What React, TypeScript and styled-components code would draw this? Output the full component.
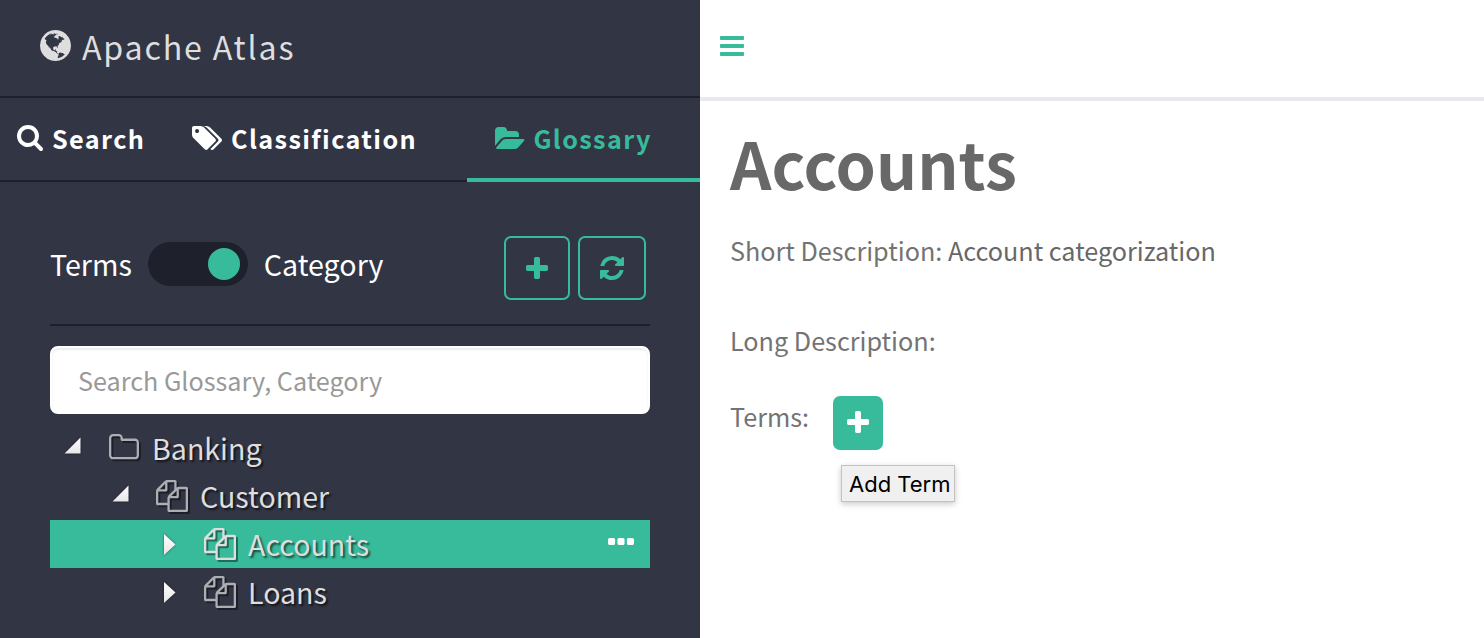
import React from "react";
import styled, { createGlobalStyle, css } from "styled-components";

const green = "#38bb9b";
const navy = "#323544";
const ink = "#1e202b";
const sourceSans = `"Noto Sans CJK SC", "Noto Sans", sans-serif`;

const GlobalStyle = createGlobalStyle`
  * { box-sizing: border-box; }
  body { margin: 0; background: #fff; font-family: ${sourceSans}; }
  button, input { font: inherit; }
`;

type Glyph = { box: [number, number, number, number]; d: string };

const glyphs: Record<string, Glyph> = {
  globe: {
    box: [128, 128, 1536, 1536],
    d: "M896 128q209 0 385.5 103t279.5 279.5 103 385.5-103 385.5-279.5 279.5-385.5 103-385.5-103-279.5-279.5-103-385.5 103-385.5 279.5-279.5 385.5-103zm274 521q-2 1-9.5 9.5t-13.5 9.5q2 0 4.5-5t5-11 3.5-7q6-7 22-15 14-6 52-12 34-8 51 11-2-2 9.5-13t14.5-12q3-2 15-4.5t15-7.5l2-22q-12 1-17.5-7t-6.5-21q0 2-6 8 0-7-4.5-8t-11.5 1-9 1q-10-3-15-7.5t-8-16.5-4-15q-2-5-9.5-11t-9.5-10q-1-2-2.5-5.5t-3-6.5-4-5.5-5.5-2.5-7 5-7.5 10-4.5 5q-3-2-6-1.5t-4.5 1-4.5 3-5 3.5q-3 2-8.5 3t-8.5 2q15-5-1-11-10-4-16-3 9-4 7.5-12t-8.5-14h5q-1-4-8.5-8.5t-17.5-8.5-13-6q-8-5-34-9.5t-33-.5q-5 6-4.5 10.5t4 14 3.5 12.5q1 6-5.5 13t-6.5 12q0 7 14 15.5t10 21.5q-3 8-16 16t-16 12q-5 8-1.5 18.5t10.5 16.5q2 2 1.5 4t-3.5 4.5-5.5 4-6.5 3.5l-3 2q-11 5-20.5-6t-13.5-26q-7-25-16-30-23-8-29 1-5-13-41-26-25-9-58-4 6-1 0-15-7-15-19-12 3-6 4-17.5t1-13.5q3-13 12-23 1-1 7-8.5t9.5-13.5.5-6q35 4 50-11 5-5 11.5-17t10.5-17q9-6 14-5.5t14.5 5.5 14.5 5q14 1 15.5-11t-7.5-20q12 1 3-17-4-7-8-9-12-4-27 5-8 4 2 8-1-1-9.5 10.5t-16.5 17.5-16-5q-1-1-5.5-13.5t-9.5-13.5q-8 0-16 15 3-8-11-15t-24-8q19-12-8-27-7-4-20.5-5t-19.5 4q-5 7-5.5 11.5t5 8 10.5 5.5 11.5 4 8.5 3q14 10 8 14-2 1-8.5 3.5t-11.5 4.5-6 4q-3 4 0 14t-2 14q-5-5-9-17.5t-7-16.5q7 9-25 6l-10-1q-4 0-16 2t-20.5 1-13.5-8q-4-8 0-20 1-4 4-2-4-3-11-9.5t-10-8.5q-46 15-94 41 6 1 12-1 5-2 13-6.5t10-5.5q34-14 42-7l5-5q14 16 20 25-7-4-30-1-20 6-22 12 7 12 5 18-4-3-11.5-10t-14.5-11-15-5q-16 0-22 1-146 80-235 222 7 7 12 8 4 1 5 9t2.5 11 11.5-3q9 8 3 19 1-1 44 27 19 17 21 21 3 11-10 18-1-2-9-9t-9-4q-3 5 .5 18.5t10.5 12.5q-7 0-9.5 16t-2.5 35.5-1 23.5l2 1q-3 12 5.5 34.5t21.5 19.5q-13 3 20 43 6 8 8 9 3 2 12 7.5t15 10 10 10.5q4 5 10 22.5t14 23.5q-2 6 9.5 20t10.5 23q-1 0-2.5 1t-2.5 1q3 7 15.5 14t15.5 13q1 3 2 10t3 11 8 2q2-20-24-62-15-25-17-29-3-5-5.5-15.5t-4.5-14.5q2 0 6 1.5t8.5 3.5 7.5 4 2 3q-3 7 2 17.5t12 18.5 17 19 12 13q6 6 14 19.5t0 13.5q9 0 20 10.5t17 19.5q5 8 8 26t5 24q2 7 8.5 13.5t12.5 9.5l16 8 13 7q5 2 18.5 10.5t21.5 11.5q10 4 16 4t14.5-2.5 13.5-3.5q15-2 29 15t21 21q36 19 55 11-2 1 .5 7.5t8 15.5 9 14.5 5.5 8.5q5 6 18 15t18 15q6-4 7-9-3 8 7 20t18 10q14-3 14-32-31 15-49-18 0-1-2.5-5.5t-4-8.5-2.5-8.5 0-7.5 5-3q9 0 10-3.5t-2-12.5-4-13q-1-8-11-20t-12-15q-5 9-16 8t-16-9q0 1-1.5 5.5t-1.5 6.5q-13 0-15-1 1-3 2.5-17.5t3.5-22.5q1-4 5.5-12t7.5-14.5 4-12.5-4.5-9.5-17.5-2.5q-19 1-26 20-1 3-3 10.5t-5 11.5-9 7q-7 3-24 2t-24-5q-13-8-22.5-29t-9.5-37q0-10 2.5-26.5t3-25-5.5-24.5q3-2 9-9.5t10-10.5q2-1 4.5-1.5t4.5 0 4-1.5 3-6q-1-1-4-3-3-3-4-3 7 3 28.5-1.5t27.5 1.5q15 11 22-2 0-1-2.5-9.5t-.5-13.5q5 27 29 9 3 3 15.5 5t17.5 5q3 2 7 5.5t5.5 4.5 5-.5 8.5-6.5q10 14 12 24 11 40 19 44 7 3 11 2t4.5-9.5 0-14-1.5-12.5l-1-8v-18l-1-8q-15-3-18.5-12t1.5-18.5 15-18.5q1-1 8-3.5t15.5-6.5 12.5-8q21-19 15-35 7 0 11-9-1 0-5-3t-7.5-5-4.5-2q9-5 2-16 5-3 7.5-11t7.5-10q9 12 21 2 8-8 1-16 5-7 20.5-10.5t18.5-9.5q7 2 8-2t1-12 3-12q4-5 15-9t13-5l17-11q3-4 0-4 18 2 31-11 10-11-6-20 3-6-3-9.5t-15-5.5q3-1 11.5-.5t10.5-1.5q15-10-7-16-17-5-43 12zm-163 877q206-36 351-189-3-3-12.5-4.5t-12.5-3.5q-18-7-24-8 1-7-2.5-13t-8-9-12.5-8-11-7q-2-2-7-6t-7-5.5-7.5-4.5-8.5-2-10 1l-3 1q-3 1-5.5 2.5t-5.5 3-4 3 0 2.5q-21-17-36-22-5-1-11-5.5t-10.5-7-10-1.5-11.5 7q-5 5-6 15t-2 13q-7-5 0-17.5t2-18.5q-3-6-10.5-4.5t-12 4.5-11.5 8.5-9 6.5-8.5 5.5-8.5 7.5q-3 4-6 12t-5 11q-2-4-11.5-6.5t-9.5-5.5q2 10 4 35t5 38q7 31-12 48-27 25-29 40-4 22 12 26 0 7-8 20.5t-7 21.5q0 6 2 16z",
  },
  search: {
    box: [64, 128, 1664, 1664],
    d: "M1216 832q0-185-131.5-316.5t-316.5-131.5-316.5 131.5-131.5 316.5 131.5 316.5 316.5 131.5 316.5-131.5 131.5-316.5zm512 832q0 52-38 90t-90 38q-54 0-90-38l-343-342q-179 124-399 124-143 0-273.5-55.5t-225-150-150-225-55.5-273.5 55.5-273.5 150-225 225-150 273.5-55.5 273.5 55.5 225 150 150 225 55.5 273.5q0 220-124 399l343 343q37 37 37 90z",
  },
  tags: {
    box: [0, 128, 1899, 1515],
    d: "M448 448q0-53-37.5-90.5t-90.5-37.5-90.5 37.5-37.5 90.5 37.5 90.5 90.5 37.5 90.5-37.5 37.5-90.5zm1067 576q0 53-37 90l-491 492q-39 37-91 37-53 0-90-37l-715-716q-38-37-64.5-101t-26.5-117v-416q0-52 38-90t90-38h416q53 0 117 26.5t102 64.5l715 714q37 39 37 91zm384 0q0 53-37 90l-491 492q-39 37-91 37-36 0-59-14t-53-45l470-470q37-37 37-90 0-52-37-91l-715-714q-38-38-102-64.5t-117-26.5h224q53 0 117 26.5t102 64.5l715 714q37 39 37 91z",
  },
  folderOpen: {
    box: [64, 128, 1879, 1408],
    d: "M1943 952q0 31-31 66l-336 396q-43 51-120.5 86.5t-143.5 35.5h-1088q-34 0-60.5-13t-26.5-43q0-31 31-66l336-396q43-51 120.5-86.5t143.5-35.5h1088q34 0 60.5 13t26.5 43zm-343-344v160h-832q-94 0-197 47.5t-164 119.5l-337 396-5 6q0-4-.5-12.5t-.5-12.5v-960q0-92 66-158t158-66h320q92 0 158 66t66 158v32h544q92 0 158 66t66 158z",
  },
  plus: {
    box: [192, 128, 1408, 1408],
    d: "M1600 736v192q0 40-28 68t-68 28h-416v416q0 40-28 68t-68 28h-192q-40 0-68-28t-28-68v-416h-416q-40 0-68-28t-28-68v-192q0-40 28-68t68-28h416v-416q0-40 28-68t68-28h192q40 0 68 28t28 68v416h416q40 0 68 28t28 68z",
  },
  refresh: {
    box: [128, 128, 1536, 1536],
    d: "M1639 1056q0 5-1 7-64 268-268 434.5t-478 166.5q-146 0-282.5-55t-243.5-157l-129 129q-19 19-45 19t-45-19-19-45v-448q0-26 19-45t45-19h448q26 0 45 19t19 45-19 45l-137 137q71 66 161 102t187 36q134 0 250-65t186-179q11-17 53-117 8-23 30-23h192q13 0 22.5 9.5t9.5 22.5zm25-800v448q0 26-19 45t-45 19h-448q-26 0-45-19t-19-45 19-45l138-138q-148-137-349-137-134 0-250 65t-186 179q-11 17-53 117-8 23-30 23h-199q-13 0-22.5-9.5t-9.5-22.5v-7q65-268 270-434.5t480-166.5q146 0 284 55.5t245 156.5l130-129q19-19 45-19t45 19 19 45z",
  },
  bars: {
    box: [128, 256, 1536, 1280],
    d: "M1664 1344v128q0 26-19 45t-45 19h-1408q-26 0-45-19t-19-45v-128q0-26 19-45t45-19h1408q26 0 45 19t19 45zm0-512v128q0 26-19 45t-45 19h-1408q-26 0-45-19t-19-45v-128q0-26 19-45t45-19h1408q26 0 45 19t19 45zm0-512v128q0 26-19 45t-45 19h-1408q-26 0-45-19t-19-45v-128q0-26 19-45t45-19h1408q26 0 45 19t19 45z",
  },
  files: {
    box: [0, 0, 1792, 1792],
    d: "M1696 384q40 0 68 28t28 68v1216q0 40-28 68t-68 28h-960q-40 0-68-28t-28-68v-288h-544q-40 0-68-28t-28-68v-672q0-40 20-88t48-76l408-408q28-28 76-48t88-20h416q40 0 68 28t28 68v328q68-40 128-40h416zm-544 213l-299 299h299v-299zm-640-384l-299 299h299v-299zm196 647l316-316v-416h-384v416q0 40-28 68t-68 28h-416v640h512v-256q0-40 20-88t48-76zm956 804v-1152h-384v416q0 40-28 68t-68 28h-416v640h896z",
  },
  folder: {
    box: [64, 128, 1664, 1408],
    d: "M1600 1312v-704q0-40-28-68t-68-28h-704q-40 0-68-28t-28-68v-64q0-40-28-68t-68-28h-320q-40 0-68 28t-28 68v960q0 40 28 68t68 28h1216q40 0 68-28t28-68zm128-704v704q0 92-66 158t-158 66h-1216q-92 0-158-66t-66-158v-960q0-92 66-158t158-66h320q92 0 158 66t66 158v32h672q92 0 158 66t66 158z",
  },
  ellipsis: {
    box: [192, 640, 1408, 384],
    d: "M576 736v192q0 40-28 68t-68 28h-192q-40 0-68-28t-28-68v-192q0-40 28-68t68-28h192q40 0 68 28t28 68zm512 0v192q0 40-28 68t-68 28h-192q-40 0-68-28t-28-68v-192q0-40 28-68t68-28h192q40 0 68 28t28 68zm512 0v192q0 40-28 68t-68 28h-192q-40 0-68-28t-28-68v-192q0-40 28-68t68-28h192q40 0 68 28t28 68z",
  },
};

const Svg = styled.svg`
  display: block;
  flex: none;
  fill: currentColor;
  overflow: visible;
`;

function Icon({ name, width }: { name: string; width: number }) {
  const { box, d } = glyphs[name];
  return (
    <Svg viewBox={box.join(" ")} width={width} height={(width * box[3]) / box[2]} aria-hidden>
      <path d={d} />
    </Svg>
  );
}

const Page = styled.div`
  display: flex;
  width: 1484px;
  height: 638px;
  overflow: hidden;
`;

const Sidebar = styled.aside`
  flex: none;
  width: 700px;
  background: ${navy};
  color: #fff;
`;

const Brand = styled.header`
  display: flex;
  align-items: center;
  height: 98px;
  padding: 0 0 5px 40px;
  gap: 11px;
  border-bottom: 2px solid ${ink};
  color: #dedede;
`;

const BrandName = styled.span`
  font-size: 32.2px;
  line-height: 48px;
  letter-spacing: 1.8px;
`;

const Tabs = styled.nav`
  display: flex;
  height: 84px;
`;

const Tab = styled.a<{ $width: number; $indent: number; $gap: number; $active?: boolean }>`
  display: flex;
  align-items: center;
  width: ${(p) => p.$width}px;
  padding: 0 0 ${(p) => (p.$active ? 0 : 2)}px ${(p) => p.$indent}px;
  gap: ${(p) => p.$gap}px;
  font-size: 25.2px;
  font-weight: 700;
  line-height: 38px;
  letter-spacing: 1.4px;
  white-space: nowrap;
  border-bottom: 2px solid ${ink};
  ${(p) =>
    p.$active &&
    css`
      color: ${green};
      border-bottom: 4px solid ${green};
    `}
`;

const Panel = styled.section`
  padding: 54px 50px 0;
`;

const Controls = styled.div`
  display: flex;
  align-items: flex-start;
  height: 90px;
  border-bottom: 2px solid ${ink};
`;

const SwitchLabel = styled.span`
  font-size: 28.6px;
  line-height: 40px;
  padding-top: 8px;
`;

const Switch = styled.button`
  display: flex;
  justify-content: flex-end;
  width: 100px;
  height: 44px;
  margin: 6px 16px 0;
  padding: 6px 8px;
  border: 0;
  border-radius: 22px;
  background: ${ink};
`;

const Knob = styled.span`
  width: 32px;
  height: 32px;
  border-radius: 50%;
  background: ${green};
`;

const Actions = styled.div`
  display: flex;
  gap: 8px;
  margin-left: auto;
  padding-right: 4px;
`;

const OutlineButton = styled.button<{ $width: number }>`
  display: flex;
  align-items: center;
  justify-content: center;
  width: ${(p) => p.$width}px;
  height: 64px;
  padding: 0;
  border: 2px solid ${green};
  border-radius: 7px;
  background: transparent;
  color: ${green};
`;

const SearchInput = styled.input`
  display: block;
  width: 600px;
  height: 68px;
  margin-top: 20px;
  padding: 0 26px;
  border: 2px solid #fff;
  border-radius: 8px;
  outline: 0;
  background: #fff;
  box-shadow: inset 0 2px 2px rgba(0, 0, 0, 0.075);
  font-size: 25.2px;
  &::placeholder {
    color: #999;
    opacity: 1;
  }
`;

const Tree = styled.div`
  padding-top: 10px;
`;

const TreeRow = styled.div<{ $level: number; $selected?: boolean }>`
  display: flex;
  align-items: center;
  height: 48px;
  padding: 0 16px 0 ${(p) => 12 + p.$level * 48}px;
  background: ${(p) => (p.$selected ? green : "transparent")};
`;

const Arrow = styled.svg`
  display: block;
  flex: none;
  width: 20px;
  height: 26px;
  overflow: visible;
  filter: drop-shadow(0 0 1px rgba(0, 0, 0, 0.5));
`;

const NodeIcon = styled.span<{ $dim: boolean; $lift: number }>`
  display: flex;
  justify-content: center;
  width: 32px;
  margin: 0 12px ${(p) => p.$lift}px 26px;
  color: ${(p) => (p.$dim ? "#adaeb3" : "#dedede")};
  filter: drop-shadow(2px 2px 0 rgba(0, 0, 0, 0.42));
`;

const NodeLabel = styled.span`
  flex: 1;
  font-size: 28.6px;
  line-height: 44px;
  color: #dedede;
  text-shadow: 2px 2px 2px rgba(0, 0, 0, 0.6);
`;

const MoreButton = styled.button`
  display: flex;
  padding: 0 0 4px;
  border: 0;
  background: transparent;
  color: #fff;
`;

const Main = styled.main`
  flex: 1;
  background: #fff;
  color: #686868;
`;

const TopBar = styled.header`
  height: 101px;
  padding: 36px 20px 0;
  border-bottom: 4px solid #e8e8ef;
  color: ${green};
`;

const Content = styled.section`
  padding: 13px 30px 0;
`;

const Title = styled.h1`
  margin: 0;
  font-size: 64.6px;
  font-weight: 700;
  line-height: 96px;
`;

const Field = styled.div<{ $top: number; $light?: boolean }>`
  display: flex;
  align-items: flex-start;
  height: 40px;
  margin-top: ${(p) => p.$top}px;
  font-size: 25.2px;
  line-height: 40px;
  white-space: pre;
`;

const FieldName = styled.span<{ $width?: number }>`
  color: #737373;
  width: ${(p) => (p.$width ? `${p.$width}px` : "auto")};
`;

const AddAnchor = styled.div`
  position: relative;
`;

const AddButton = styled.button`
  display: flex;
  align-items: center;
  justify-content: center;
  width: 50px;
  height: 54px;
  padding: 0 0 2px;
  border: 0;
  border-radius: 7px;
  background: ${green};
  color: #fff;
`;

const Tooltip = styled.div`
  position: absolute;
  top: 69px;
  left: 8px;
  width: 114px;
  height: 37px;
  padding-left: 7px;
  border: 1px solid #c2c2c2;
  background: #f0f0f0;
  box-shadow: 0 2px 6px rgba(0, 0, 0, 0.22);
  color: #000;
  font-family: Inter, sans-serif;
  font-size: 22px;
  line-height: 36px;
  white-space: nowrap;
`;

type Node = { label: string; level: number; icon: string; open: boolean; selected?: boolean };

const nodes: Node[] = [
  { label: "Banking", level: 0, icon: "folder", open: true },
  { label: "Customer", level: 1, icon: "files", open: true },
  { label: "Accounts", level: 2, icon: "files", open: false, selected: true },
  { label: "Loans", level: 2, icon: "files", open: false },
];

function TreeArrow({ open }: { open: boolean }) {
  return (
    <Arrow viewBox="0 0 20 26">
      <defs>
        <linearGradient id="arrowFill" x1="0" y1="0" x2="0" y2="1">
          <stop offset="0" stopColor="#fff" />
          <stop offset="1" stopColor="#e6e6e6" />
        </linearGradient>
      </defs>
      <path d={open ? "M18.5 2.5v16h-16z" : "M6 3v21l11.500-10.500z"} fill="url(#arrowFill)" />
    </Arrow>
  );
}

export default function App() {
  return (
    <Page>
      <GlobalStyle />
      <Sidebar>
        <Brand>
          <Icon name="globe" width={31} />
          <BrandName>Apache Atlas</BrandName>
        </Brand>
        <Tabs>
          <Tab $width={175} $indent={17} $gap={9}>
            <Icon name="search" width={26} />
            Search
          </Tab>
          <Tab $width={292} $indent={17} $gap={9}>
            <Icon name="tags" width={30} />
            Classification
          </Tab>
          <Tab $width={233} $indent={28} $gap={9} $active>
            <Icon name="folderOpen" width={29.4} />
            Glossary
          </Tab>
        </Tabs>
        <Panel>
          <Controls>
            <SwitchLabel>Terms</SwitchLabel>
            <Switch aria-label="Show categories">
              <Knob />
            </Switch>
            <SwitchLabel>Category</SwitchLabel>
            <Actions>
              <OutlineButton $width={66} aria-label="Add">
                <Icon name="plus" width={22} />
              </OutlineButton>
              <OutlineButton $width={68} aria-label="Refresh">
                <Icon name="refresh" width={24} />
              </OutlineButton>
            </Actions>
          </Controls>
          <SearchInput placeholder="Search Glossary, Category" />
          <Tree>
            {nodes.map((n) => (
              <TreeRow key={n.label} $level={n.level} $selected={n.selected}>
                <TreeArrow open={n.open} />
                <NodeIcon $dim={!n.selected} $lift={n.icon === "folder" ? 2 : 0}>
                  <Icon name={n.icon} width={n.icon === "folder" ? 30 : 32} />
                </NodeIcon>
                <NodeLabel>{n.label}</NodeLabel>
                {n.selected && (
                  <MoreButton aria-label="More">
                    <Icon name="ellipsis" width={26} />
                  </MoreButton>
                )}
              </TreeRow>
            ))}
          </Tree>
        </Panel>
      </Sidebar>
      <Main>
        <TopBar>
          <Icon name="bars" width={24} />
        </TopBar>
        <Content>
          <Title>Accounts</Title>
          <Field $top={20}>
            <FieldName>Short Description: </FieldName>
            <span>Account categorization</span>
          </Field>
          <Field $top={50}>
            <FieldName>Long Description:</FieldName>
          </Field>
          <Field $top={36}>
            <FieldName $width={103}>Terms:</FieldName>
            <AddAnchor>
              <AddButton aria-label="Add Term">
                <Icon name="plus" width={22} />
              </AddButton>
              <Tooltip>Add Term</Tooltip>
            </AddAnchor>
          </Field>
        </Content>
      </Main>
    </Page>
  );
}
